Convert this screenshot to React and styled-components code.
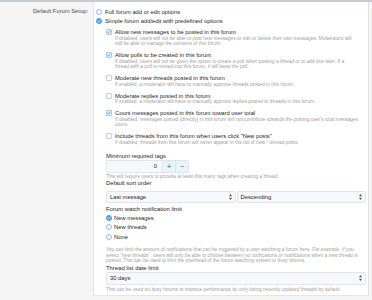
import React from 'react';
import styled, { createGlobalStyle } from 'styled-components';

const GlobalStyle = createGlobalStyle`
  body {
    margin: 0;
    background: #f5f5f5;
    font-family: "Liberation Sans", Arial, sans-serif;
  }
`;

const Page = styled.div`
  display: flex;
  flex-direction: column;
  min-height: 300px;
  background: #f5f5f5;
`;

const TopBar = styled.div`
  height: 2px;
  background: #c8cdd2;
`;

const FormRow = styled.div`
  display: grid;
  grid-template-columns: 93px 276px;
  align-items: start;
`;

const RowLabel = styled.div`
  text-align: right;
  padding: 5px 5px 0 0;
  font-size: 5.8px;
  line-height: 9px;
  color: #4a4a4a;
  white-space: nowrap;
`;

const Pane = styled.div`
  background: #fff;
  border: 1px solid #e3e5e7;
  border-top: none;
  padding: 5.5px 2px 2px 2px;
`;

const OptionRow = styled.label`
  display: flex;
  align-items: center;
  gap: ${({ gap }) => gap ?? 3}px;
  height: ${({ h }) => h ?? 9}px;
  font-size: 5.8px;
  color: #262626;
  white-space: nowrap;
`;

const RadioMark = styled.span`
  flex: none;
  display: inline-flex;
  align-items: center;
  justify-content: center;
  width: 6px;
  height: 6px;
  box-sizing: border-box;
  border-radius: 50%;
  border: 1px solid ${({ checked }) => (checked ? '#47a0e2' : '#8dc0e8')};
  background: ${({ checked }) => (checked ? '#47a0e2' : '#fff')};
`;

const BoxMark = styled.span`
  flex: none;
  display: inline-flex;
  align-items: center;
  justify-content: center;
  width: 6px;
  height: 6px;
  box-sizing: border-box;
  border-radius: 1px;
  border: 1px solid ${({ checked }) => (checked ? '#a6cbec' : '#b9d3ea')};
  background: ${({ checked }) => (checked ? '#e8f2fb' : '#fbfdff')};
`;

const CheckList = styled.div`
  display: flex;
  flex-direction: column;
  gap: 5px;
  margin: 3px 0 0 10px;
`;

const CheckItem = styled.div`
  display: flex;
  flex-direction: column;
`;

const Hint = styled.div`
  padding-left: ${({ indent }) => indent ?? 0}px;
  margin-top: ${({ mt }) => mt ?? 0}px;
  font-size: 4.9px;
  line-height: ${({ lh }) => lh ?? 5.5}px;
  color: #a0a0a0;
  white-space: nowrap;
`;

const Section = styled.div`
  margin: ${({ mt }) => mt}px 0 0 10px;
  display: flex;
  flex-direction: column;
`;

const FieldTitle = styled.div`
  font-size: 5.9px;
  line-height: 7px;
  color: #262626;
  margin-top: ${({ mt }) => mt ?? 0}px;
  white-space: nowrap;
`;

const NumberBox = styled.div`
  display: flex;
  width: 83px;
  height: 12.5px;
  margin-top: 0.5px;
  box-sizing: border-box;
  border: 1px solid #e0e5ea;
  border-radius: 2px;
  background: #f6f8fb;
  overflow: hidden;
`;

const NumberValue = styled.div`
  flex: 1;
  display: flex;
  align-items: center;
  justify-content: flex-end;
  padding-right: 5px;
  font-size: 5.8px;
  color: #262626;
`;

const StepButton = styled.div`
  width: 12px;
  display: flex;
  align-items: center;
  justify-content: center;
  background: #eaf2fa;
  border-left: 1px solid #dae5f0;
  color: #4a9ad9;
  font-size: 7px;
  font-weight: bold;
`;

const SelectPair = styled.div`
  display: grid;
  grid-template-columns: 1fr 1fr;
  gap: 1px;
  margin-top: 3.5px;
`;

const SelectBox = styled.div`
  display: flex;
  align-items: center;
  justify-content: space-between;
  height: 12.5px;
  margin-top: ${({ mt }) => mt ?? 0}px;
  box-sizing: border-box;
  padding: 0 3px;
  border: 1px solid #e0e5ea;
  border-radius: 2px;
  background: #f6f8fb;
  font-size: 5.8px;
  color: #262626;
`;

const RadioList = styled.div`
  display: flex;
  flex-direction: column;
`;

const Check = ({ color }) => (
  <svg width="4" height="4" viewBox="0 0 8 8">
    <path d="M1.2 4.2 L3.2 6 L6.8 1.8" fill="none" stroke={color} strokeWidth="1.5" strokeLinecap="round" strokeLinejoin="round" />
  </svg>
);

const Arrows = () => (
  <svg width="3" height="6" viewBox="0 0 6 12">
    <path d="M3 0 L6 4.5 H0 Z M3 12 L0 7.5 H6 Z" fill="#555" />
  </svg>
);

const Radio = ({ checked, children, gap, h }) => (
  <OptionRow gap={gap} h={h}>
    <RadioMark checked={checked}>{checked && <Check color="#fff" />}</RadioMark>
    {children}
  </OptionRow>
);

const options = [
  {
    label: 'Allow new messages to be posted in this forum',
    checked: true,
    hint: [
      'If disabled, users will not be able to post new messages or edit or delete their own messages. Moderators will',
      'still be able to manage the contents of this forum.',
    ],
  },
  {
    label: 'Allow polls to be created in this forum',
    checked: true,
    hint: [
      'If disabled, users will not be given the option to create a poll when posting a thread or to add one later. If a',
      'thread with a poll is moved into this forum, it will keep the poll.',
    ],
  },
  {
    label: 'Moderate new threads posted in this forum',
    checked: false,
    hint: ['If enabled, a moderator will have to manually approve threads posted in this forum.'],
  },
  {
    label: 'Moderate replies posted in this forum',
    checked: false,
    hint: ['If enabled, a moderator will have to manually approve replies posted to threads in this forum.'],
  },
  {
    label: 'Count messages posted in this forum toward user total',
    checked: true,
    hint: [
      "If disabled, messages posted (directly) in this forum will not contribute towards the posting user's total messages",
      'count.',
    ],
  },
  {
    label: 'Include threads from this forum when users click "New posts"',
    checked: false,
    hint: ['If disabled, threads from this forum will never appear in the list of new / unread posts.'],
  },
];

const watchHint = [
  'You can limit the amount of notifications that can be triggered by a user watching a forum here. For example, if you',
  'select "new threads", users will only be able to choose between no notifications or notifications when a new thread is',
  'posted. This can be used to limit the overhead of the forum watching system in busy forums.',
];

export default function App() {
  return (
    <>
      <GlobalStyle />
      <Page>
        <TopBar />
        <FormRow>
          <RowLabel>Default Forum Setup:</RowLabel>
          <Pane>
            <Radio>Full forum add or edit options</Radio>
            <Radio checked>Simple forum add/edit with predefined options</Radio>

            <CheckList>
              {options.map(({ label, checked, hint }) => (
                <CheckItem key={label}>
                  <OptionRow h={7}>
                    <BoxMark checked={checked}>{checked && <Check color="#3a8fd6" />}</BoxMark>
                    {label}
                  </OptionRow>
                  {hint.map((line) => (
                    <Hint key={line} indent={9}>{line}</Hint>
                  ))}
                </CheckItem>
              ))}
            </CheckList>

            <Section mt={7.5}>
              <FieldTitle>Minimum required tags</FieldTitle>
              <NumberBox>
                <NumberValue>0</NumberValue>
                <StepButton>+</StepButton>
                <StepButton>−</StepButton>
              </NumberBox>
              <Hint mt={1.5} lh={6}>This will require users to provide at least this many tags when creating a thread.</Hint>

              <FieldTitle>Default sort order</FieldTitle>
              <SelectPair>
                <SelectBox>Last message<Arrows /></SelectBox>
                <SelectBox>Descending<Arrows /></SelectBox>
              </SelectPair>

              <FieldTitle mt={3}>Forum watch notification limit</FieldTitle>
              <RadioList>
                <Radio checked gap={2} h={9.5}>New messages</Radio>
                <Radio gap={2} h={9.5}>New threads</Radio>
                <Radio gap={2} h={9.5}>None</Radio>
              </RadioList>
              {watchHint.map((line, i) => (
                <Hint key={line} mt={i === 0 ? 5.75 : 0}>{line}</Hint>
              ))}

              <FieldTitle mt={0.75}>Thread list date limit</FieldTitle>
              <SelectBox mt={0.5}>30 days<Arrows /></SelectBox>
              <Hint mt={2.5} lh={6}>This can be used on busy forums to improve performance by only listing recently updated threads by default.</Hint>
            </Section>
          </Pane>
        </FormRow>
      </Page>
    </>
  );
}
